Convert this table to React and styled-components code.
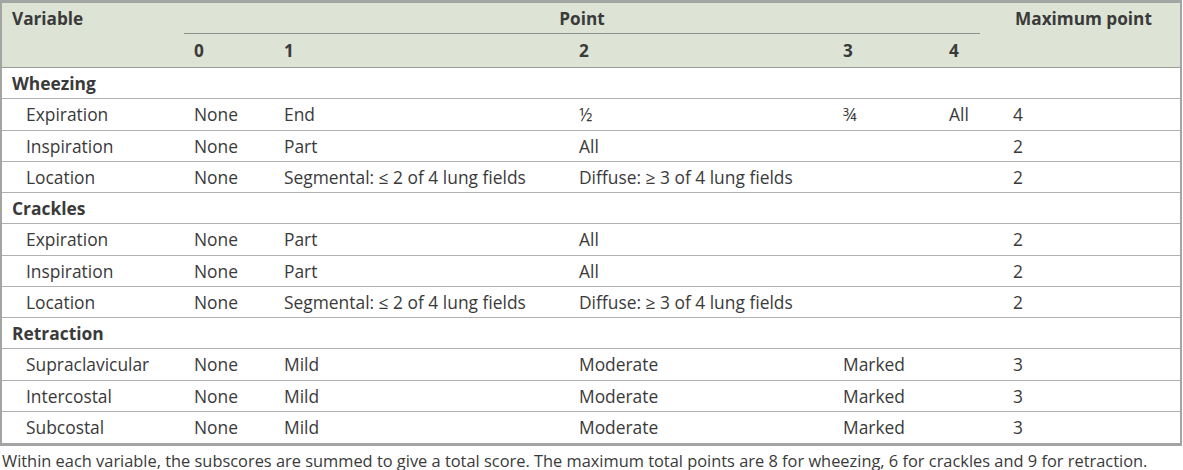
import React from 'react'
import styled, { createGlobalStyle } from 'styled-components'

const GlobalStyle = createGlobalStyle`
    body {
        margin: 0;
        background: #fff;
        font-family: "Open Sans", "Noto Sans", sans-serif;
        color: #3a3a3a;
    }
`

const groups = [
    {
        name: 'Wheezing',
        rows: [
            ['Expiration', 'None', 'End', '½', '¾', 'All', '4'],
            ['Inspiration', 'None', 'Part', 'All', '', '', '2'],
            ['Location', 'None', 'Segmental: ≤ 2 of 4 lung fields', 'Diffuse: ≥ 3 of 4 lung fields', '', '', '2'],
        ],
    },
    {
        name: 'Crackles',
        rows: [
            ['Expiration', 'None', 'Part', 'All', '', '', '2'],
            ['Inspiration', 'None', 'Part', 'All', '', '', '2'],
            ['Location', 'None', 'Segmental: ≤ 2 of 4 lung fields', 'Diffuse: ≥ 3 of 4 lung fields', '', '', '2'],
        ],
    },
    {
        name: 'Retraction',
        rows: [
            ['Supraclavicular', 'None', 'Mild', 'Moderate', 'Marked', '', '3'],
            ['Intercostal', 'None', 'Mild', 'Moderate', 'Marked', '', '3'],
            ['Subcostal', 'None', 'Mild', 'Moderate', 'Marked', '', '3'],
        ],
    },
]

const widths = [182, 90, 295, 264, 106, 41, 200]
const isFraction = (v) => v === '½' || v === '¾'

function App(){

    return(
        <Page>
            <GlobalStyle />
            <Frame>
                <Table>
                    <colgroup>
                        {widths.map((w, i) => <col key={i} style={{ width: w }} />)}
                    </colgroup>
                    <thead>
                        <HeadRow $h={31}>
                            <HeadCell>Variable</HeadCell>
                            <HeadCell colSpan={5} $center $rule>Point</HeadCell>
                            <HeadCell $pad={35}>Maximum point</HeadCell>
                        </HeadRow>
                        <HeadRow $h={34} $last>
                            <HeadCell />
                            <HeadCell>0</HeadCell>
                            <HeadCell>1</HeadCell>
                            <HeadCell>2</HeadCell>
                            <HeadCell>3</HeadCell>
                            <HeadCell>4</HeadCell>
                            <HeadCell />
                        </HeadRow>
                    </thead>
                    <tbody>
                        {groups.map((g, gi) => (
                            <React.Fragment key={g.name}>
                                <Row>
                                    <GroupCell colSpan={7} $last={false}>{g.name}</GroupCell>
                                </Row>
                                {g.rows.map((r, ri) => {
                                    const last = gi === groups.length - 1 && ri === g.rows.length - 1
                                    return (
                                        <Row key={ri}>
                                            {r.map((v, ci) => (
                                                <Cell
                                                    key={ci}
                                                    $last={last}
                                                    $pad={ci === 0 ? 24 : ci === 6 ? 33 : 10}
                                                >
                                                    {isFraction(v) ? <Fraction>{v}</Fraction> : v}
                                                </Cell>
                                            ))}
                                        </Row>
                                    )
                                })}
                            </React.Fragment>
                        ))}
                    </tbody>
                </Table>
            </Frame>
            <Note>
                Within each variable, the subscores are summed to give a total score. The maximum total points are 8 for wheezing, 6 for crackles and 9 for retraction.
            </Note>
        </Page>
    )
}

const Page = styled.div`
    width: 1183px;
`

const Frame = styled.div`
    border-top: 3px solid #a3a5a3;
    border-left: 2px solid #a3a5a3;
    border-right: 2px solid #a3a5a3;
    border-bottom: 3px solid #a3a5a3;
    width: 1178px;
`

const Table = styled.table`
    width: 100%;
    table-layout: fixed;
    border-collapse: separate;
    border-spacing: 0;
    font-size: 17.4px;
`

const HeadRow = styled.tr`
    height: ${p => p.$h}px;
    background: #dde3d5;
    & > th {
        border-bottom: ${p => p.$last ? '1px solid #9a9c99' : 'none'};
    }
`

const HeadCell = styled.th`
    padding: 0 0 0 ${p => p.$pad ?? 10}px;
    text-align: ${p => p.$center ? 'center' : 'left'};
    font-weight: 700;
    font-size: 17.2px;
    color: #3a3a3a;
    vertical-align: middle;
    white-space: nowrap;
    ${p => p.$rule && `
        box-shadow: inset 0 -1px 0 #8e928c;
        padding-left: 0;
    `}
`

const Row = styled.tr`
    height: 31.25px;
`

const Cell = styled.td`
    padding: 0 0 0 ${p => p.$pad}px;
    border-bottom: ${p => p.$last ? 'none' : '1px solid #b0b0b0'};
    white-space: nowrap;
    vertical-align: middle;
    color: #3a3a3a;
`

const GroupCell = styled(Cell)`
    padding-left: 10px;
    font-weight: 700;
`

const Fraction = styled.span`
    font-size: 17.4px;
`

const Note = styled.div`
    padding: 6px 0 0 2px;
    font-size: 16.4px;
    line-height: 18px;
    color: #3a3a3a;
    white-space: nowrap;
`

export default App
